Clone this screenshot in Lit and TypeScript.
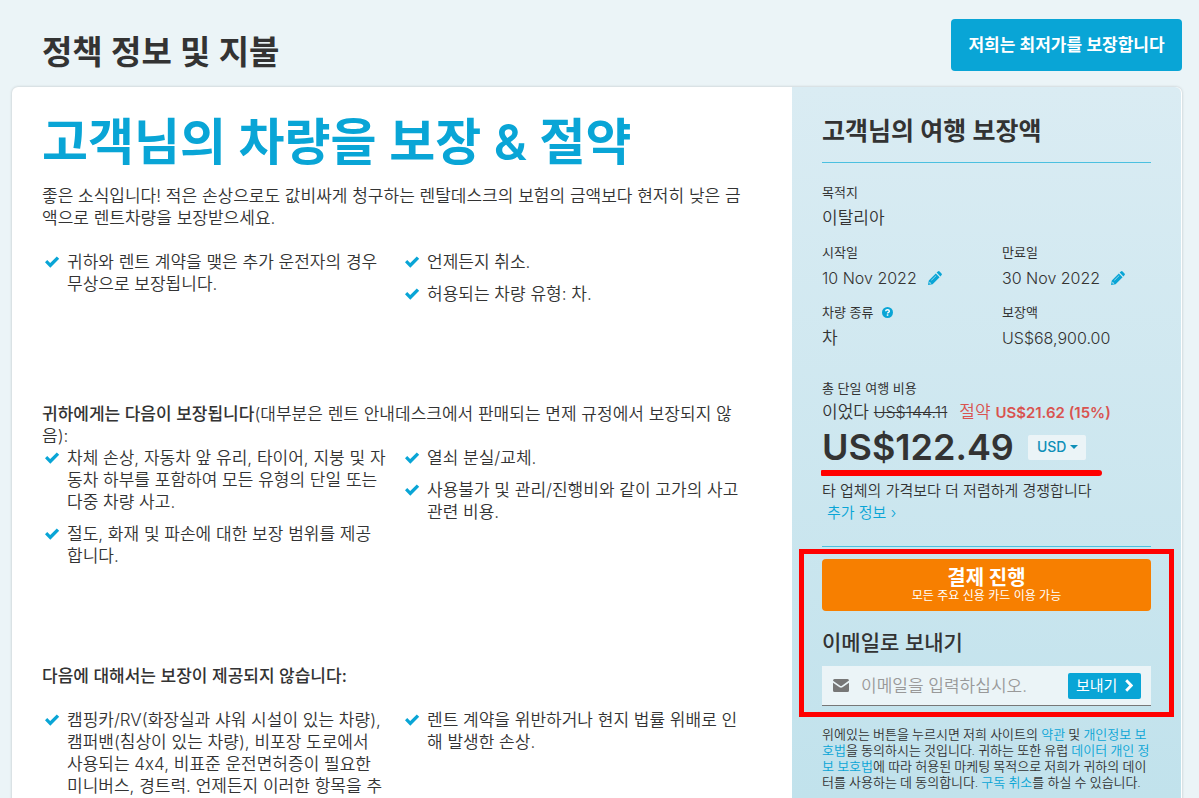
import { LitElement, html, css } from "lit";
import { customElement, property } from "lit/decorators.js";

const check = html`<svg class="check" viewBox="0 0 16 14" aria-hidden="true">
  <path d="M1 7.2 3.2 5 6.2 7.9 12.8 1.4 15.2 3.8 6.3 12.8Z" />
</svg>`;

@customElement("check-list")
class CheckList extends LitElement {
  @property({ attribute: false }) columns: string[][][] = [];

  static styles = css`
    :host {
      display: block;
    }
    .columns {
      display: grid;
      grid-template-columns: 1fr 1fr;
    }
    .list {
      list-style: none;
      margin: 0;
      padding: 0;
    }
    .item {
      display: flex;
      gap: 7px;
      margin-bottom: 10px;
      padding-left: 2px;
      white-space: nowrap;
    }
    .check {
      flex: none;
      width: 16px;
      height: 14px;
      margin-top: 4px;
      fill: #09a5d6;
    }
  `;

  render() {
    return html`<div class="columns">
      ${this.columns.map(
        (items) => html`<ul class="list">
          ${items.map(
            (lines) => html`<li class="item">
              ${check}
              <span>${lines.map((line, i) => (i ? html`<br />${line}` : line))}</span>
            </li>`
          )}
        </ul>`
      )}
    </div>`;
  }
}

const pencil = html`<svg class="pencil" viewBox="0 0 14 14" aria-hidden="true">
  <path
    fill="#09a5d6"
    fill-rule="evenodd"
    d="M0 14 .8 9.4 7.8 2.4 11.6 6.2 4.6 13.2ZM8.6 1.6 9.9.4Q10.8-.3 11.6.5L13.5 2.4Q14.3 3.2 13.6 4.1L12.4 5.4ZM1.6 10.7 1.3 12.1 1.9 12.7 3.3 12.4ZM3.1 9.2 7.9 4.4 8.3 4.8 3.5 9.6Z"
  />
</svg>`;

@customElement("app-root")
class AppRoot extends LitElement {
  static styles = css`
    :host {
      display: block;
      box-sizing: border-box;
      height: 100vh;
      overflow: hidden;
      padding: 19px 17px 0 12px;
      background: #ebf4f7;
      color: #333;
      font: 350 17px/22px Inter, "Noto Sans CJK KR", sans-serif;
    }
    * {
      box-sizing: border-box;
    }
    h1,
    h2,
    h3,
    p,
    dl,
    dd {
      margin: 0;
    }
    a {
      color: #09a5d6;
      text-decoration: none;
    }
    button,
    select,
    input {
      border: 0;
      font: inherit;
    }
    .top {
      display: flex;
      justify-content: space-between;
      align-items: flex-start;
      height: 68px;
      padding-left: 30px;
    }
    .page-title {
      padding-top: 11px;
      font-size: 33px;
      line-height: 44px;
      font-weight: 600;
    }
    .guarantee {
      min-width: 231px;
      height: 52px;
      padding: 0 15px;
      border-radius: 4px;
      background: #09a5d6;
      color: #fff;
      font-weight: 600;
    }
    .card {
      display: flex;
      min-height: 100%;
      border-radius: 6px;
      background: #fff;
      box-shadow: 0 0 3px rgba(0, 0, 0, 0.2);
    }
    .main {
      flex: 1;
      padding: 26px 30px 30px;
    }
    .headline {
      margin-bottom: 14px;
      color: #09a5d6;
      font-size: 50px;
      line-height: 58px;
      font-weight: 600;
    }
    .lines {
      white-space: nowrap;
    }
    .section {
      margin-bottom: 78px;
      padding-bottom: 10px;
    }
    .strong {
      font-size: inherit;
      font-weight: 500;
    }
    .spaced {
      margin-bottom: 22px;
    }
    .side {
      flex: none;
      width: 389px;
      margin-right: 1px;
      padding: 30px 30px 0;
      border-radius: 0 6px 0 0;
      background: linear-gradient(#daecf3, #c1e2ec 711px);
    }
    .side-title {
      height: 46px;
      margin-bottom: 17px;
      border-bottom: 1px solid #4bc0e0;
      font-size: 25px;
      line-height: 28px;
      font-weight: 600;
    }
    .facts {
      display: grid;
      grid-template-columns: 180px 1fr;
      row-gap: 9px;
      margin-bottom: 25px;
    }
    .wide {
      grid-column: 1 / -1;
    }
    .label {
      display: flex;
      align-items: center;
      gap: 8px;
      height: 24px;
      font-size: 13px;
      font-weight: 400;
    }
    .value {
      display: flex;
      align-items: center;
      gap: 11px;
      height: 27px;
    }
    .number {
      font-size: 16px;
      font-weight: 300;
    }
    .icon-button {
      display: flex;
      padding: 0;
      background: none;
    }
    .pencil {
      width: 14px;
      height: 14px;
    }
    .help {
      width: 11px;
      height: 11px;
    }
    .was {
      display: flex;
      gap: 12px;
      line-height: 24px;
    }
    .save {
      color: #d9534f;
    }
    .save-number {
      font-size: 15px;
      font-weight: 600;
    }
    .price-row {
      position: relative;
      display: flex;
      align-items: center;
      gap: 14px;
      height: 51px;
      padding-bottom: 7px;
    }
    .price {
      font-size: 36px;
      font-weight: 600;
    }
    .underline {
      position: absolute;
      left: -1px;
      bottom: 0;
      width: 281px;
      height: 6px;
      border-radius: 1px 3px 3px 1px;
      background: #f00;
    }
    .currency {
      position: relative;
      display: flex;
      align-items: center;
    }
    .currency-select {
      appearance: none;
      width: 58px;
      height: 25px;
      padding: 0 9px;
      border-radius: 2px;
      background: #ebf4f7;
      color: #0e8fb8;
      font-size: 14px;
      font-weight: 500;
    }
    .caret {
      position: absolute;
      right: 8px;
      width: 8px;
      height: 4px;
      fill: #0e8fb8;
      pointer-events: none;
    }
    .note {
      margin-top: 4px;
      padding-bottom: 22px;
      border-bottom: 1px solid #4bc0e0;
      font-size: 15px;
    }
    .more {
      padding-left: 5px;
    }
    .actions {
      position: relative;
      margin: 12px 0 21px;
    }
    .frame {
      position: absolute;
      inset: -10px -23px -11px;
      border: 5px solid #f00;
      pointer-events: none;
    }
    .pay {
      display: block;
      width: 100%;
      height: 52px;
      padding: 0;
      border-radius: 4px;
      background: #f77f00;
      color: #fff;
      font-size: 12px;
      line-height: 16px;
      font-weight: 400;
    }
    .pay-title {
      display: block;
      padding-top: 2px;
      font-size: 20px;
      line-height: 20px;
      font-weight: 700;
    }
    .mail-title {
      display: block;
      margin: 18px 0 10px;
      font-size: 21px;
      line-height: 27px;
      font-weight: 500;
    }
    .mail-row {
      display: flex;
      align-items: center;
      height: 40px;
      padding: 0 10px 0 11px;
      border-bottom: 1px solid #777;
      background: #ebf4f7;
    }
    .envelope {
      flex: none;
      width: 16px;
      height: 13px;
      margin-right: 12px;
    }
    .mail-input {
      flex: 1;
      min-width: 0;
      padding: 0;
      background: none;
      color: #333;
      outline: 0;
    }
    .mail-input::placeholder {
      color: #999;
      opacity: 1;
    }
    .send {
      display: flex;
      align-items: center;
      justify-content: space-between;
      width: 73px;
      height: 26px;
      padding: 0 8px;
      border-radius: 2px;
      background: #09a5d6;
      color: #fff;
      font-size: 15px;
      font-weight: 400;
    }
    .chevron {
      width: 8px;
      height: 13px;
    }
    .legal {
      font-family: Roboto, "Noto Sans CJK KR", sans-serif;
      font-size: 13px;
      line-height: 16px;
      white-space: nowrap;
    }
  `;

  render() {
    return html`
      <header class="top">
        <h1 class="page-title">정책 정보 및 지불</h1>
        <button class="guarantee" type="button">저희는 최저가를 보장합니다</button>
      </header>
      <div class="card">
        <main class="main">
          <h2 class="headline">고객님의 차량을 보장 &amp; 절약</h2>
          <section class="section">
            <p class="lines spaced">
              좋은 소식입니다! 적은 손상으로도 값비싸게 청구하는 렌탈데스크의 보험의 금액보다 현저히 낮은 금<br />액으로
              렌트차량을 보장받으세요.
            </p>
            <check-list
              .columns=${[
                [["귀하와 렌트 계약을 맺은 추가 운전자의 경우", "무상으로 보장됩니다."]],
                [["언제든지 취소."], ["허용되는 차량 유형: 차."]],
              ]}
            ></check-list>
          </section>
          <section class="section">
            <p class="lines">
              <b class="strong">귀하에게는 다음이 보장됩니다</b>(대부분은 렌트 안내데스크에서 판매되는 면제 규정에서
              보장되지 않<br />음):
            </p>
            <check-list
              .columns=${[
                [
                  ["차체 손상, 자동차 앞 유리, 타이어, 지붕 및 자", "동차 하부를 포함하여 모든 유형의 단일 또는", "다중 차량 사고."],
                  ["절도, 화재 및 파손에 대한 보장 범위를 제공", "합니다."],
                ],
                [["열쇠 분실/교체."], ["사용불가 및 관리/진행비와 같이 고가의 사고", "관련 비용."]],
              ]}
            ></check-list>
          </section>
          <section class="section">
            <h3 class="strong spaced">다음에 대해서는 보장이 제공되지 않습니다:</h3>
            <check-list
              .columns=${[
                [
                  [
                    "캠핑카/RV(화장실과 샤워 시설이 있는 차량),",
                    "캠퍼밴(침상이 있는 차량), 비포장 도로에서",
                    "사용되는 4x4, 비표준 운전면허증이 필요한",
                    "미니버스, 경트럭. 언제든지 이러한 항목을 추",
                  ],
                ],
                [["렌트 계약을 위반하거나 현지 법률 위배로 인", "해 발생한 손상."]],
              ]}
            ></check-list>
          </section>
        </main>
        <aside class="side">
          <h2 class="side-title">고객님의 여행 보장액</h2>
          <dl class="facts">
            <div class="wide">
              <dt class="label">목적지</dt>
              <dd class="value">이탈리아</dd>
            </div>
            <div>
              <dt class="label">시작일</dt>
              <dd class="value number">
                10 Nov 2022
                <button class="icon-button" type="button" aria-label="시작일">${pencil}</button>
              </dd>
            </div>
            <div>
              <dt class="label">만료일</dt>
              <dd class="value number">
                30 Nov 2022
                <button class="icon-button" type="button" aria-label="만료일">${pencil}</button>
              </dd>
            </div>
            <div>
              <dt class="label">
                차량 종류
                <svg class="help" viewBox="0 0 12 12" aria-hidden="true">
                  <circle cx="6" cy="6" r="6" fill="#09a5d6" />
                  <path d="M4 4.7Q4.1 2.9 6 2.9 8 2.9 8 4.5 8 5.4 7 5.9 6.1 6.3 6.1 7.2" fill="none" stroke="#fff" stroke-width="1.6" />
                  <path d="M5.2 8h1.7v1.6H5.2z" fill="#fff" />
                </svg>
              </dt>
              <dd class="value">차</dd>
            </div>
            <div>
              <dt class="label">보장액</dt>
              <dd class="value number">US$68,900.00</dd>
            </div>
          </dl>
          <p class="label">총 단일 여행 비용</p>
          <p class="was">
            <span>이었다 <s class="number">US$144.11</s></span>
            <span class="save">절약 <span class="save-number">US$21.62 (15%)</span></span>
          </p>
          <div class="price-row">
            <span class="price">US$122.49</span>
            <span class="currency">
              <select class="currency-select" aria-label="USD">
                <option>USD</option>
              </select>
              <svg class="caret" viewBox="0 0 8 4" aria-hidden="true"><path d="M0 0h8L4 4z" /></svg>
            </span>
            <span class="underline"></span>
          </div>
          <div class="note">
            <p>타 업체의 가격보다 더 저렴하게 경쟁합니다</p>
            <a class="more" href="#">추가 정보 ›</a>
          </div>
          <div class="actions">
            <button class="pay" type="button">
              <span class="pay-title">결제 진행</span>모든 주요 신용 카드 이용 가능
            </button>
            <label class="mail-title" for="email">이메일로 보내기</label>
            <div class="mail-row">
              <svg class="envelope" viewBox="0 0 16 13" aria-hidden="true">
                <path fill="#777" d="M1.5 0h13Q16 0 16 1.5L8.9 6.8Q8 7.4 7.1 6.8L0 1.7Q0 0 1.5 0ZM0 3.7 6.5 8.3Q8 9.2 9.5 8.3L16 3.7V11.5Q16 13 14.5 13H1.5Q0 13 0 11.5Z" />
              </svg>
              <input class="mail-input" id="email" type="email" placeholder="이메일을 입력하십시오." />
              <button class="send" type="button">
                보내기
                <svg class="chevron" viewBox="0 0 8 13" aria-hidden="true">
                  <path d="M1.2 1.2 6.2 6.5 1.2 11.8" fill="none" stroke="#fff" stroke-width="2.8" />
                </svg>
              </button>
            </div>
            <span class="frame"></span>
          </div>
          <p class="legal">
            위에있는 버튼을 누르시면 저희 사이트의 <a href="#">약관</a> 및 <a href="#">개인정보 보<br />호법</a>을 동의하시는
            것입니다. 귀하는 또한 유럽 <a href="#">데이터 개인 정<br />보 보호법</a>에 따라 허용된 마케팅 목적으로 저희가
            귀하의 데이<br />터를 사용하는 데 동의합니다. <a href="#">구독 취소</a>를 하실 수 있습니다.
          </p>
        </aside>
      </div>
    `;
  }
}
